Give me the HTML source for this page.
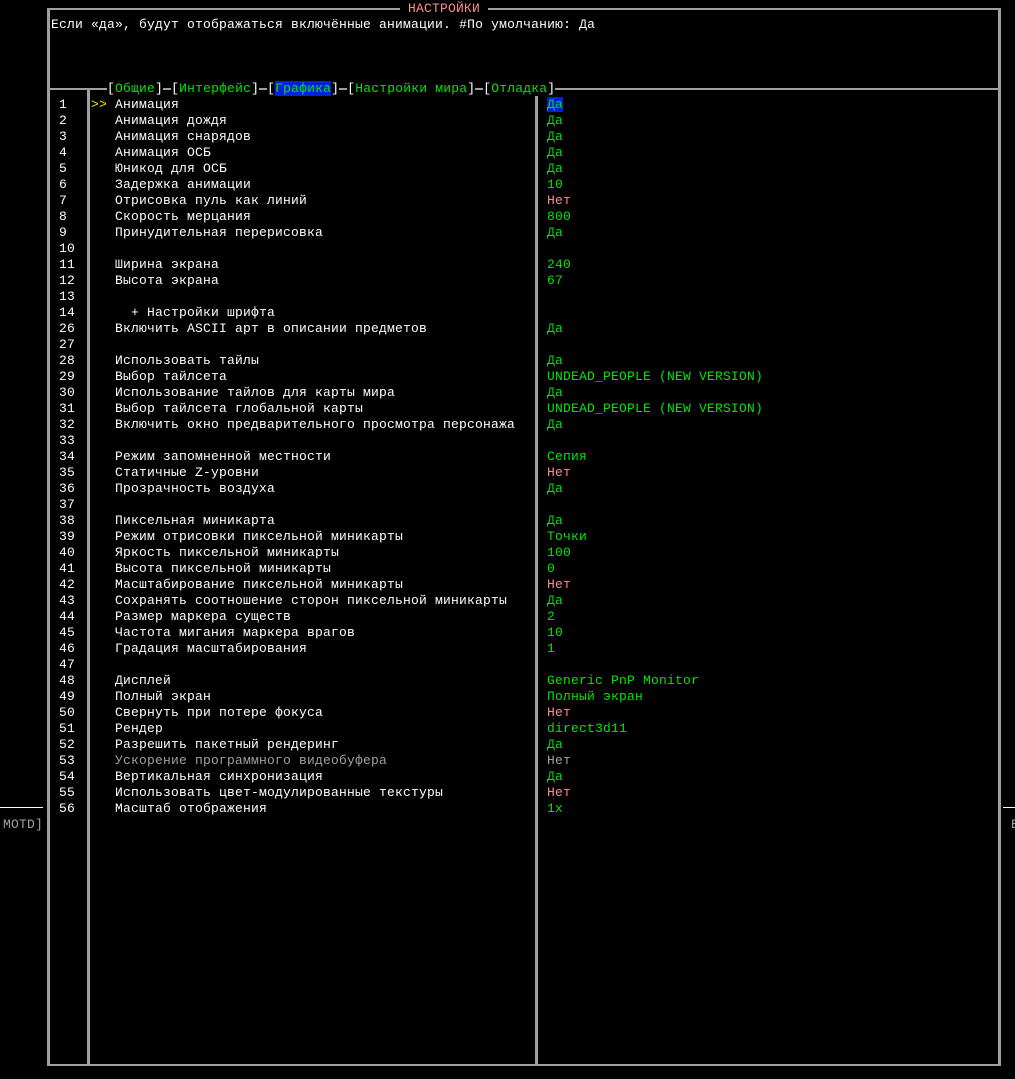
<!DOCTYPE html>
<html><head><meta charset="utf-8"><style>
body{margin:0;background:#000;width:1015px;height:1079px;overflow:hidden;position:relative;font-family:"Liberation Mono","DejaVu Sans Mono",monospace;font-size:13px;letter-spacing:0.2px;color:#fff}
.a{position:absolute}
pre{margin:0;font:inherit;line-height:16px;position:absolute;white-space:pre}
.l{position:absolute;background:#a0a0a0}
.g{color:#00e600}.r{color:#ff8a8a}.y{color:#ffe000}.gr{color:#a0a0a0}.w{color:#fff}
.bk{background:#000}
</style></head><body>
<div class="l" style="left:47px;top:8px;width:3px;height:1058px"></div>
<div class="l" style="left:998px;top:8px;width:3px;height:1058px"></div>
<div class="l" style="left:47px;top:8px;width:954px;height:2px"></div>
<div class="l" style="left:47px;top:1064px;width:954px;height:2px"></div>
<div class="l" style="left:47px;top:88px;width:954px;height:2px"></div>
<div class="l" style="left:87px;top:88px;width:3px;height:978px"></div>
<div class="l" style="left:535px;top:96px;width:3px;height:970px"></div>
<div class="l" style="left:0;top:807px;width:43px;height:1px;background:#fff"></div>
<div class="l" style="left:1003px;top:807px;width:12px;height:1px;background:#fff"></div>
<pre class="r bk" style="left:400px;top:1px;padding:0 8px">НАСТРОЙКИ</pre>
<pre style="left:51px;top:17px">Если «да», будут отображаться включённые анимации. #По умолчанию: Да</pre>
<pre class="gr" style="left:3px;top:817px">MOTD]</pre>
<pre class="gr" style="left:1011px;top:817px">E</pre>
<pre style="left:107px;top:81px"><span class="bk">[<span class="g">Общие</span>]</span> <span class="bk">[<span class="g">Интерфейс</span>]</span> <span class="bk">[<span style="background:#0020e0;color:#00e600">Графика</span>]</span> <span class="bk">[<span class="g">Настройки мира</span>]</span> <span class="bk">[<span class="g">Отладка</span>]</span></pre>
<pre style="left:59px;top:97px">1
2
3
4
5
6
7
8
9
10
11
12
13
14
26
27
28
29
30
31
32
33
34
35
36
37
38
39
40
41
42
43
44
45
46
47
48
49
50
51
52
53
54
55
56</pre>
<pre class="y" style="left:91px;top:97px">&gt;&gt;</pre>
<pre style="left:115px;top:97px">Анимация
Анимация дождя
Анимация снарядов
Анимация ОСБ
Юникод для ОСБ
Задержка анимации
Отрисовка пуль как линий
Скорость мерцания
Принудительная перерисовка

Ширина экрана
Высота экрана

  + Настройки шрифта
Включить ASCII арт в описании предметов

Использовать тайлы
Выбор тайлсета
Использование тайлов для карты мира
Выбор тайлсета глобальной карты
Включить окно предварительного просмотра персонажа

Режим запомненной местности
Статичные Z-уровни
Прозрачность воздуха

Пиксельная миникарта
Режим отрисовки пиксельной миникарты
Яркость пиксельной миникарты
Высота пиксельной миникарты
Масштабирование пиксельной миникарты
Сохранять соотношение сторон пиксельной миникарты
Размер маркера существ
Частота мигания маркера врагов
Градация масштабирования

Дисплей
Полный экран
Свернуть при потере фокуса
Рендер
Разрешить пакетный рендеринг
<span class="gr">Ускорение программного видеобуфера</span>
Вертикальная синхронизация
Использовать цвет-модулированные текстуры
Масштаб отображения</pre>
<pre class="g" style="left:547px;top:97px"><span style="background:#0020e0">Да</span>
Да
Да
Да
Да
10
<span class="r">Нет</span>
800
Да

240
67


Да

Да
UNDEAD_PEOPLE (NEW VERSION)
Да
UNDEAD_PEOPLE (NEW VERSION)
Да

Сепия
<span class="r">Нет</span>
Да

Да
Точки
100
0
<span class="r">Нет</span>
Да
2
10
1

Generic PnP Monitor
Полный экран
<span class="r">Нет</span>
direct3d11
Да
<span class="gr">Нет</span>
Да
<span class="r">Нет</span>
1x</pre>
</body></html>
